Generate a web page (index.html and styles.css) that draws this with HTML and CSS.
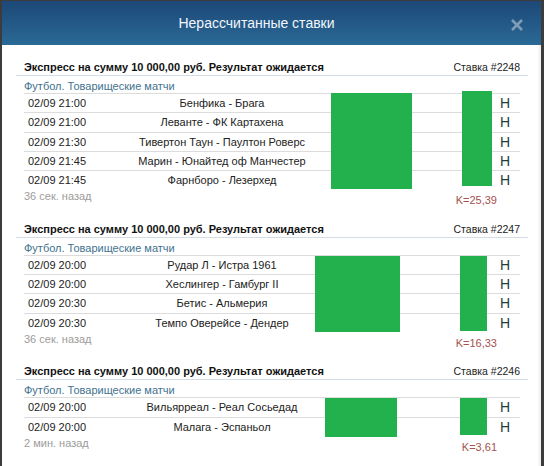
FILE: index.html
```html
<!DOCTYPE html>
<html lang="ru">
<head>
<meta charset="utf-8">
<title>Нерассчитанные ставки</title>
<link rel="stylesheet" href="styles.css">
</head>
<body>
<div class="modal">
  <div class="modal-head">
    <h1 class="modal-title">Нерассчитанные ставки</h1>
    <span class="close" aria-label="Закрыть">
      <svg width="14" height="14" viewBox="0 0 14 14"><path d="M2 2 L12 12 M12 2 L2 12" stroke="#7f9cb8" stroke-width="2.6" stroke-linecap="butt"/></svg>
    </span>
  </div>
  <div class="modal-body">

    <section class="bet">
      <div class="bet-title"><b>Экспресс на сумму 10 000,00 руб. Результат ожидается</b><span class="bet-id">Ставка #2248</span></div>
      <div class="cat">Футбол. Товарищеские матчи</div>
      <div class="rows">
        <div class="row"><span class="date">02/09 21:00</span><span class="match">Бенфика - Брага</span><span></span><span class="res">Н</span></div>
        <div class="row"><span class="date">02/09 21:00</span><span class="match">Леванте - ФК Картахена</span><span></span><span class="res">Н</span></div>
        <div class="row"><span class="date">02/09 21:30</span><span class="match">Тивертон Таун - Паултон Роверс</span><span></span><span class="res">Н</span></div>
        <div class="row"><span class="date">02/09 21:45</span><span class="match">Марин - Юнайтед оф Манчестер</span><span></span><span class="res">Н</span></div>
        <div class="row"><span class="date">02/09 21:45</span><span class="match">Фарнборо - Лезерхед</span><span></span><span class="res">Н</span></div>
        <div class="mask m1a"></div>
        <div class="mask m1b"></div>
      </div>
      <div class="bet-foot"><span class="ago">36 сек. назад</span><span class="coef">K=25,39</span></div>
    </section>

    <section class="bet">
      <div class="bet-title"><b>Экспресс на сумму 10 000,00 руб. Результат ожидается</b><span class="bet-id">Ставка #2247</span></div>
      <div class="cat">Футбол. Товарищеские матчи</div>
      <div class="rows">
        <div class="row"><span class="date">02/09 20:00</span><span class="match">Рудар Л - Истра 1961</span><span></span><span class="res">Н</span></div>
        <div class="row"><span class="date">02/09 20:00</span><span class="match">Хеслингер - Гамбург II</span><span></span><span class="res">Н</span></div>
        <div class="row"><span class="date">02/09 20:30</span><span class="match">Бетис - Альмерия</span><span></span><span class="res">Н</span></div>
        <div class="row"><span class="date">02/09 20:30</span><span class="match">Темпо Оверейсе - Дендер</span><span></span><span class="res">Н</span></div>
        <div class="mask m2a"></div>
        <div class="mask m2b"></div>
      </div>
      <div class="bet-foot"><span class="ago">36 сек. назад</span><span class="coef">K=16,33</span></div>
    </section>

    <section class="bet">
      <div class="bet-title"><b>Экспресс на сумму 10 000,00 руб. Результат ожидается</b><span class="bet-id">Ставка #2246</span></div>
      <div class="cat">Футбол. Товарищеские матчи</div>
      <div class="rows">
        <div class="row"><span class="date">02/09 20:00</span><span class="match">Вильярреал - Реал Сосьедад</span><span></span><span class="res">Н</span></div>
        <div class="row"><span class="date">02/09 20:00</span><span class="match">Малага - Эспаньол</span><span></span><span class="res">Н</span></div>
        <div class="mask m3a"></div>
        <div class="mask m3b"></div>
      </div>
      <div class="bet-foot"><span class="ago">2 мин. назад</span><span class="coef">K=3,61</span></div>
    </section>

  </div>
</div>
</body>
</html>
```
FILE: styles.css
```css
html, body {
  margin: 0;
  padding: 0;
}
body {
  background: #3c3c3c;
  font-family: "Liberation Sans", Arial, sans-serif;
  color: #222;
  overflow: hidden;
  height: 466px;
}
.modal {
  margin: 1px 0 0 2px;
  width: 539px;
  height: 480px;
  background: #fff;
  box-shadow: inset -2px 0 3px rgba(0,0,0,0.08);
}
.modal-head {
  position: relative;
  height: 44px;
  display: flex;
  align-items: center;
  justify-content: center;
  padding-right: 30px;
  background: linear-gradient(to bottom, #1d4877 0%, #245a88 55%, #2a6a96 100%);
}
.modal-title {
  margin: 0;
  font-family: "Liberation Sans", Arial, sans-serif;
  font-weight: 400;
  font-size: 14px;
  color: #f2f6fa;
}
.close {
  position: absolute;
  right: 17px;
  top: 17px;
  width: 14px;
  height: 14px;
  display: block;
}
.close svg { display: block; }
.modal-body {
  padding: 14px 13px 0 14px;
}
.bet {
  margin-bottom: 13.5px;
}
.bet-title {
  display: flex;
  justify-content: space-between;
  align-items: center;
  height: 16px;
  padding: 0 8px 0 8px;
  border-bottom: 1px solid #d3dde3;
  font-size: 11px;
}
.bet-title b {
  font-weight: 700;
  color: #111;
}
.bet-id {
  font-size: 10.5px;
  color: #222;
}
.cat {
  padding: 3px 8px 0;
  line-height: 14px;
  font-size: 11px;
  color: #3f7290;
}
.rows {
  position: relative;
  margin: 0 8px;
}
.row {
  box-sizing: border-box;
  height: 19.25px;
  border-top: 1px solid #dcdcdc;
  display: grid;
  grid-template-columns: 74px 240px 1fr 20px;
  align-items: center;
  font-size: 11px;
  padding-left: 4px;
}
.date { color: #222; }
.match { text-align: center; color: #222; }
.res {
  font-size: 14px;
  color: #1f3d3a;
  line-height: 14px;
}
.mask {
  position: absolute;
  background: #22b14c;
}
.m1a { left: 307px; top: 0; width: 81px; height: 96px; }
.m1b { left: 438px; top: -2px; width: 30px; height: 95px; }
.m2a { left: 291px; top: 1px; width: 85px; height: 76px; }
.m2b { left: 436px; top: 1px; width: 27px; height: 75px; }
.m3a { left: 301px; top: 1px; width: 72px; height: 39px; }
.m3b { left: 436px; top: 1px; width: 27px; height: 37px; }
.bet-foot {
  display: flex;
  justify-content: space-between;
  align-items: flex-start;
  padding: 0 31px 0 8px;
  font-size: 11px;
  line-height: 14px;
}
.ago { color: #9c9c9c; }
.coef {
  padding-top: 4px;
  color: #a3524e;
}
```
